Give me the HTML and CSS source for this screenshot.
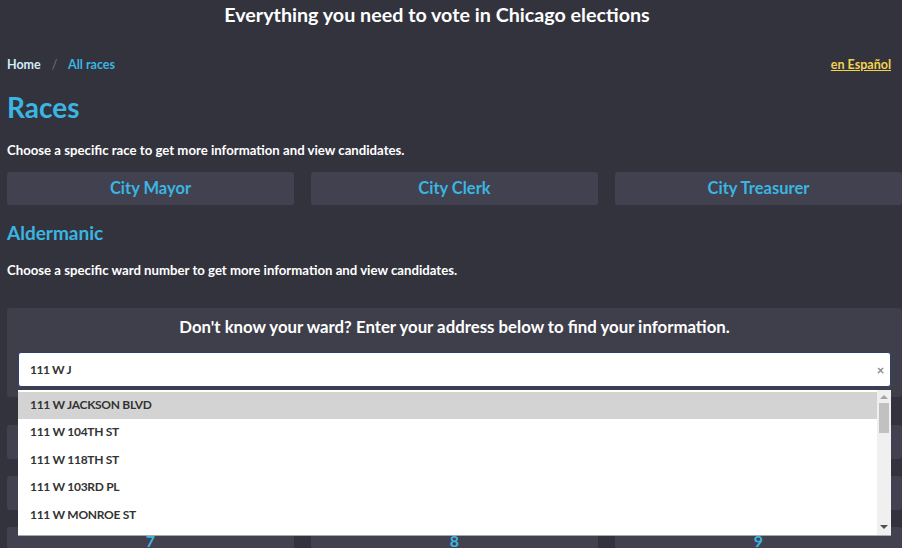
FILE: index.html
```html
<!DOCTYPE html>
<html>

<head>
    <meta charset="utf-8">
    <title>Chicago Elections - Races</title>
    <link rel="stylesheet" href="styles.css">
</head>

<body>
    <header class="site-header">Everything you need to vote in Chicago elections</header>

    <main class="content">
        <div class="topbar">
            <nav class="crumbs">
                <a href="#" class="crumb-home">Home</a>
                <span class="crumb-sep">/</span>
                <a href="#" class="crumb-current">All races</a>
            </nav>
            <a href="#" class="lang">en Español</a>
        </div>

        <h1 class="page-title">Races</h1>
        <p class="lead">Choose a specific race to get more information and view candidates.</p>

        <div class="race-grid">
            <a href="#" class="race-btn">City Mayor</a>
            <a href="#" class="race-btn">City Clerk</a>
            <a href="#" class="race-btn">City Treasurer</a>
        </div>

        <h2 class="section-title">Aldermanic</h2>
        <p class="lead lead-ward">Choose a specific ward number to get more information and view candidates.</p>

        <section class="ward-finder">
            <h3 class="finder-title">Don't know your ward? Enter your address below to find your information.</h3>
            <div class="search">
                <div class="search-box">
                    <span class="search-text">111 W J</span>
                    <span class="search-clear">×</span>
                </div>
                <div class="suggest">
                    <ul class="suggest-list">
                        <li class="active">111 W JACKSON BLVD</li>
                        <li>111 W 104TH ST</li>
                        <li>111 W 118TH ST</li>
                        <li>111 W 103RD PL</li>
                        <li>111 W MONROE ST</li>
                    </ul>
                    <div class="scrollbar">
                        <span class="arrow-up"></span>
                        <span class="thumb"></span>
                        <span class="arrow-down"></span>
                    </div>
                </div>
            </div>
        </section>

        <div class="race-grid ward-grid">
            <a href="#" class="race-btn">1</a>
            <a href="#" class="race-btn">2</a>
            <a href="#" class="race-btn">3</a>
            <a href="#" class="race-btn">4</a>
            <a href="#" class="race-btn">5</a>
            <a href="#" class="race-btn">6</a>
            <a href="#" class="race-btn">7</a>
            <a href="#" class="race-btn">8</a>
            <a href="#" class="race-btn">9</a>
        </div>
    </main>
</body>

</html>
```

FILE: styles.css
```css
* {
    margin: 0;
    padding: 0;
    box-sizing: border-box;
}

body {
    background-color: #33333d;
    font-family: Lato, "Liberation Sans", sans-serif;
    font-weight: bold;
    color: #fff;
    overflow: hidden;
}

a {
    text-decoration: none;
}

.site-header {
    height: 31px;
    line-height: 29px;
    padding-right: 28px;
    text-align: center;
    font-size: 19.7px;
}

.content {
    padding-left: 7px;
}

.topbar {
    display: flex;
    justify-content: space-between;
    align-items: center;
    margin-top: 25px;
    height: 16px;
    padding-right: 11px;
    font-size: 12.5px;
}

.crumbs a,
.crumbs span {
    margin-right: 8px;
}

.crumb-home {
    color: #cfeefa;
}

.crumb-sep {
    color: #6f7480;
    font-weight: normal;
}

.crumb-current {
    color: #3bb5e2;
}

.lang {
    color: #f4d34c;
    text-decoration: underline;
}

.page-title {
    margin-top: 19px;
    font-size: 28px;
    line-height: 32px;
    color: #3bb5e2;
}

.lead {
    font-size: 13.2px;
    line-height: 16px;
    margin-top: 19px;
}

.race-grid {
    display: grid;
    grid-template-columns: repeat(3, 287px);
    column-gap: 17px;
    row-gap: 17px;
    margin-top: 14px;
}

.race-btn {
    display: block;
    height: 33px;
    line-height: 33px;
    text-align: center;
    background-color: #41414f;
    border-radius: 3px;
    color: #3bb5e2;
    font-size: 16.5px;
}

.section-title {
    margin-top: 16px;
    font-size: 19px;
    line-height: 24px;
    color: #3bb5e2;
}

.lead-ward {
    margin-top: 17px;
}

.ward-finder {
    margin-top: 30px;
    background-color: #3f3f4c;
    border-radius: 3px;
    padding: 9px 11px 10px 11px;
}

.finder-title {
    text-align: center;
    font-size: 16.8px;
    line-height: 20px;
    margin-bottom: 15px;
}

.search {
    position: relative;
}

.search-box {
    display: flex;
    justify-content: space-between;
    align-items: center;
    height: 35px;
    background-color: #fff;
    border: 1px solid #2c3f6e;
    border-radius: 3px;
    padding: 0 6px 0 11px;
    color: #333;
    font-size: 12px;
    letter-spacing: -0.4px;
}

.search-clear {
    color: #888;
    font-size: 13px;
}

.suggest {
    position: absolute;
    top: 38px;
    left: 0;
    right: 0;
    height: 146px;
    background-color: #fff;
    border-bottom: 1px solid #aaa;
    display: flex;
    z-index: 2;
}

.suggest-list {
    flex: 1;
    list-style: none;
    padding-top: 2px;
}

.suggest-list li {
    height: 27.4px;
    line-height: 26px;
    padding-left: 12px;
    color: #333;
    font-size: 12px;
    letter-spacing: -0.3px;
}

.suggest-list li.active {
    background-color: #d3d3d3;
}

.scrollbar {
    width: 14px;
    background-color: #f0f0f0;
    display: flex;
    flex-direction: column;
    align-items: center;
    padding-top: 5px;
}

.arrow-up {
    border-left: 4px solid transparent;
    border-right: 4px solid transparent;
    border-bottom: 4px solid #a3a3a3;
}

.thumb {
    width: 10px;
    height: 30px;
    margin-top: 4px;
    background-color: #c1c1c1;
}

.arrow-down {
    margin-top: auto;
    margin-bottom: 6px;
    border-left: 4px solid transparent;
    border-right: 4px solid transparent;
    border-top: 4px solid #505050;
}

.ward-grid {
    margin-top: 28px;
}

.ward-grid .race-btn {
    height: 34px;
    line-height: 28px;
    font-size: 16px;
}
```
